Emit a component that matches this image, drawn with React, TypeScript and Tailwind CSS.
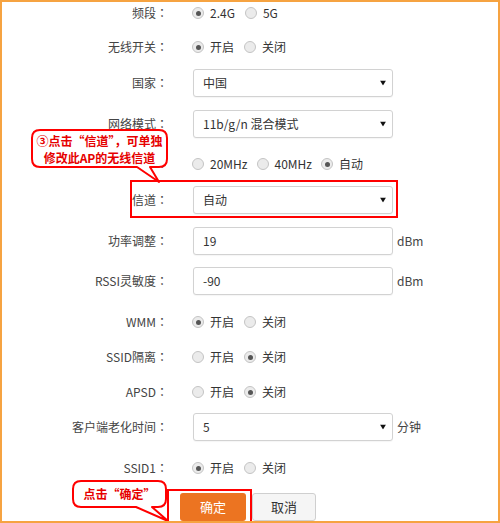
import React from "react";

const Radio = ({ checked, label }: { checked?: boolean; label: string }) => (
  <span className="flex items-center">
    <span className="w-3 h-3 rounded-full border border-[#c4c4c4] bg-[#ebebeb] flex items-center justify-center">
      {checked && <span className="w-[5px] h-[5px] rounded-full bg-[#555]" />}
    </span>
    <span className="ml-[6px]">{label}</span>
  </span>
);

const Arrow = () => (
  <svg width="6" height="5" viewBox="0 0 6 5" className="absolute right-[6px] top-1/2 -translate-y-1/2">
    <path d="M0 0 H6 L3 5 Z" fill="#111" />
  </svg>
);

const Box = ({ value, select }: { value: string; select?: boolean }) => (
  <div className="relative w-[200px] h-[28px] border border-[#d2d2d2] rounded-[3px] bg-white flex items-center pl-[9px] text-[#333] shadow-[0_1px_1px_rgba(0,0,0,0.04)]">
    {value}
    {select && <Arrow />}
  </div>
);

const Label = ({ text }: { text: string }) => (
  <div className="w-[168px] shrink-0 text-right text-[#444]">
    {text}
    <span className="font-['Noto_Sans_CJK_JP',sans-serif]">：</span>
  </div>
);

export default function App() {
  return (
    <div className="relative w-[500px] h-[523px] bg-white overflow-hidden font-['Noto_Sans_CJK_SC',sans-serif] text-[12px] leading-[16px] text-[#333]">
      <div className="flex flex-col pt-[3px]">
        <div className="flex items-center h-[20px]">
          <Label text="频段" />
          <div className="ml-[24px] flex items-center gap-[10px]">
            <Radio checked label="2.4G" />
            <Radio label="5G" />
          </div>
        </div>
        <div className="flex items-center h-[20px] mt-[14px]">
          <Label text="无线开关" />
          <div className="ml-[24px] flex items-center gap-[10px]">
            <Radio checked label="开启" />
            <Radio label="关闭" />
          </div>
        </div>
        <div className="flex items-center h-[28px] mt-[12px]">
          <Label text="国家" />
          <div className="ml-[25px]">
            <Box value="中国" select />
          </div>
        </div>
        <div className="flex items-center h-[28px] mt-[13px]">
          <Label text="网络模式" />
          <div className="ml-[25px]">
            <Box value="11b/g/n 混合模式" select />
          </div>
        </div>
        <div className="flex items-center h-[20px] mt-[16px]">
          <Label text="" />
          <div className="ml-[24px] flex items-center gap-[9px]">
            <Radio label="20MHz" />
            <Radio label="40MHz" />
            <Radio checked label="自动" />
          </div>
        </div>
        <div className="flex items-center h-[28px] mt-[12px]">
          <Label text="信道" />
          <div className="ml-[25px]">
            <Box value="自动" select />
          </div>
        </div>
        <div className="flex items-center h-[28px] mt-[13px]">
          <Label text="功率调整" />
          <div className="ml-[25px] flex items-center">
            <Box value="19" />
            <span className="ml-[4px] text-[#444]">dBm</span>
          </div>
        </div>
        <div className="flex items-center h-[28px] mt-[12px]">
          <Label text="RSSI灵敏度" />
          <div className="ml-[25px] flex items-center">
            <Box value="-90" />
            <span className="ml-[4px] text-[#444]">dBm</span>
          </div>
        </div>
        <div className="flex items-center h-[20px] mt-[17px]">
          <Label text="WMM" />
          <div className="ml-[24px] flex items-center gap-[10px]">
            <Radio checked label="开启" />
            <Radio label="关闭" />
          </div>
        </div>
        <div className="flex items-center h-[20px] mt-[15px]">
          <Label text="SSID隔离" />
          <div className="ml-[24px] flex items-center gap-[10px]">
            <Radio label="开启" />
            <Radio checked label="关闭" />
          </div>
        </div>
        <div className="flex items-center h-[20px] mt-[15px]">
          <Label text="APSD" />
          <div className="ml-[24px] flex items-center gap-[10px]">
            <Radio label="开启" />
            <Radio checked label="关闭" />
          </div>
        </div>
        <div className="flex items-center h-[28px] mt-[11px]">
          <Label text="客户端老化时间" />
          <div className="ml-[25px] flex items-center">
            <Box value="5" select />
            <span className="ml-[4px] text-[#444]">分钟</span>
          </div>
        </div>
        <div className="flex items-center h-[20px] mt-[17px]">
          <Label text="SSID1" />
          <div className="ml-[24px] flex items-center gap-[10px]">
            <Radio checked label="开启" />
            <Radio label="关闭" />
          </div>
        </div>
        <div className="flex items-center mt-[15px] ml-[180px] gap-[6px]">
          <button className="w-[66px] h-[28px] rounded-[3px] bg-[#ec7421] text-white text-[13px]">确定</button>
          <button className="w-[64px] h-[28px] rounded-[3px] bg-[#f5f5f5] border border-[#cfcfcf] text-[#333] text-[13px]">取消</button>
        </div>
      </div>

      {/* annotation highlight boxes */}
      <div className="absolute left-[130px] top-[180px] w-[268px] h-[38px] border-2 border-[#ff0000] pointer-events-none" />
      <div className="absolute left-[167px] top-[489px] w-[85px] h-[40px] border-2 border-[#ff0000] pointer-events-none" />

      {/* callouts */}
      <svg className="absolute left-0 top-0 pointer-events-none" width="500" height="523" viewBox="0 0 500 523">
        <path
          d="M40,130 H159 Q167,130 167,138 V159 Q167,167 159,167 H150 L159,182 L137,167 H40 Q32,167 32,159 V138 Q32,130 40,130 Z"
          fill="#fff"
          stroke="#ff0000"
          strokeWidth="2"
          strokeLinejoin="round"
        />
        <path
          d="M81,481 H158 Q166,481 166,489 V499 Q166,507 158,507 H152 L168,521 L136,507 H81 Q73,507 73,499 V489 Q73,481 81,481 Z"
          fill="#fff"
          stroke="#ff0000"
          strokeWidth="2"
          strokeLinejoin="round"
        />
      </svg>
      <div className="absolute left-[32px] top-[132px] w-[135px] text-center text-[12px] font-bold leading-[17px] text-[#e60000]">
        <div>③点击“信道”，可单独</div>
        <div>修改此AP的无线信道</div>
      </div>
      <div className="absolute left-[73px] top-[485px] w-[93px] text-center text-[12px] font-bold leading-[18px] text-[#e60000]">
        点击“确定”
      </div>

      {/* outer frame */}
      <div className="absolute inset-0 border-2 border-[#f6a341] pointer-events-none" />
    </div>
  );
}
